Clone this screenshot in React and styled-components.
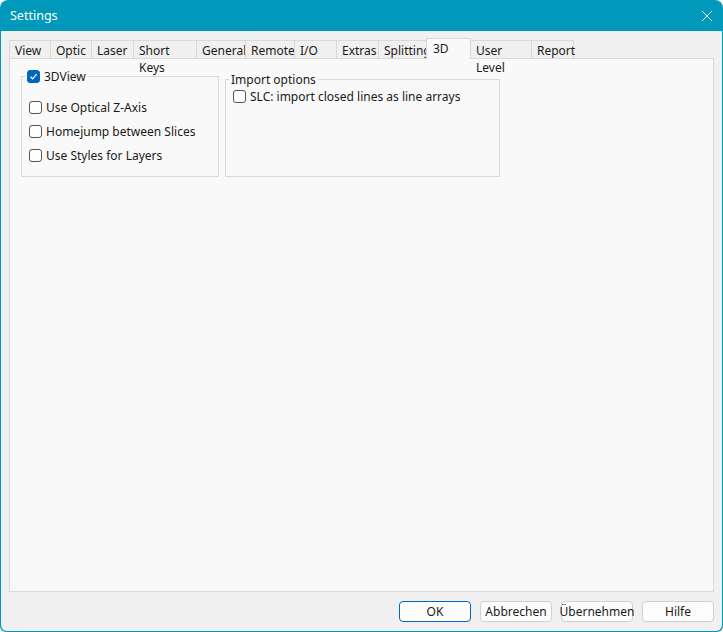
import React from "react";
import styled, { createGlobalStyle } from "styled-components";

const G = createGlobalStyle`
  html,body{margin:0;padding:0;background:#fff;}
  body{font-family:"Noto Sans","Open Sans",sans-serif;font-size:12px;color:#1a1a1a;}
`;
const Win = styled.div`
  width:723px;height:632px;box-sizing:border-box;background:#0099bb;border-radius:8px 8px 6px 6px;
  display:flex;flex-direction:column;overflow:hidden;
`;
const Title = styled.div`
  height:31px;display:flex;align-items:center;justify-content:space-between;padding:0 10px;color:#fff;font-size:12.5px;
`;
const Body = styled.div`
  flex:1;background:#f0f0f0;margin:0 1px 1px 1px;display:flex;flex-direction:column;padding:7px 8px 0 8px;border-radius:0 0 6px 6px;
`;
const Tabs = styled.div`display:flex;align-items:flex-end;height:20px;padding-left:1px;`;
const Tab = styled.div`
  width:${p=>p.w}px;box-sizing:border-box;height:${p=>p.sel?21:18}px;border:1px solid #d9d9d9;border-bottom:none;margin-left:-1px;
  background:${p=>p.sel?"#f9f9f9":"#f0f0f0"};padding:${p=>p.sel?"1px 0 0 6px":"1px 0 0 5px"};
  position:relative;z-index:${p=>p.sel?1:0};margin-bottom:${p=>p.sel?-1:0}px;
`;
const Panel = styled.div`
  height:534px;background:#f9f9f9;border:1px solid #d9d9d9;display:flex;align-items:flex-start;gap:6px;padding:18px 0 0 11px;box-sizing:border-box;
`;
const Group = styled.fieldset`
  margin:0;border:1px solid #d9d9d9;width:${p=>p.w}px;height:${p=>p.h}px;box-sizing:border-box;padding:0 7px;position:relative;top:${p=>p.t}px;
`;
const Legend = styled.legend`padding:0 2px;margin-left:-4px;display:flex;align-items:center;gap:4px;`;
const Row = styled.label`display:flex;align-items:center;gap:4px;height:${p=>p.h||24}px;`;
const Box = styled.span`
  width:11px;height:11px;border:1px solid #555;border-radius:3px;background:${p=>p.on?"#0067c0":"#fff"};border-color:${p=>p.on?"#0067c0":"#555"};
  display:inline-flex;align-items:center;justify-content:center;flex:none;
`;
const Footer = styled.div`display:flex;justify-content:flex-end;gap:9px;padding:9px 0 0;`;
const Btn = styled.div`
  width:${p=>p.w||72}px;height:21px;box-sizing:border-box;border:1px solid ${p=>p.def?"#0067c0":"#d0d0d0"};border-radius:4px;background:#fdfdfd;
  display:flex;align-items:center;justify-content:center;
`;
const Check = ({on}) => <Box on={on}>{on && <svg width="9" height="9" viewBox="0 0 9 9"><path d="M1.5 4.8L3.6 6.8 7.6 2.2" stroke="#fff" strokeWidth="1.2" fill="none"/></svg>}</Box>;

const tabs=[["View",42],["Optic",42],["Laser",43],["Short Keys",64],["General",50],["Remote",50],["I/O",43],["Extras",43],["Splitting",49],["3D",45],["User Level",62],["Report",43]];

export default function App(){
  return <><G/><Win>
    <Title><span>Settings</span><svg width="12" height="12" viewBox="0 0 12 12"><path d="M1 1L11 11M11 1L1 11" stroke="#fff" strokeWidth="1"/></svg></Title>
    <Body>
      <Tabs>{tabs.map(([t,w])=><Tab key={t} w={w} sel={t==="3D"}>{t}</Tab>)}</Tabs>
      <Panel>
        <Group w={198} h={109} t={-9}>
          <Legend><Check on/>3DView</Legend>
          <div style={{height:10}}/>
          <Row><Check/>Use Optical Z-Axis</Row>
          <Row><Check/>Homejump between Slices</Row>
          <Row><Check/>Use Styles for Layers</Row>
        </Group>
        <Group w={275} h={106} t={-6}>
          <Legend>Import options</Legend>
          <Row h={16}><Check/>SLC: import closed lines as line arrays</Row>
        </Group>
      </Panel>
      <Footer>
        <Btn def>OK</Btn><Btn>Abbrechen</Btn><Btn>Übernehmen</Btn><Btn>Hilfe</Btn>
      </Footer>
    </Body>
  </Win></>;
}
